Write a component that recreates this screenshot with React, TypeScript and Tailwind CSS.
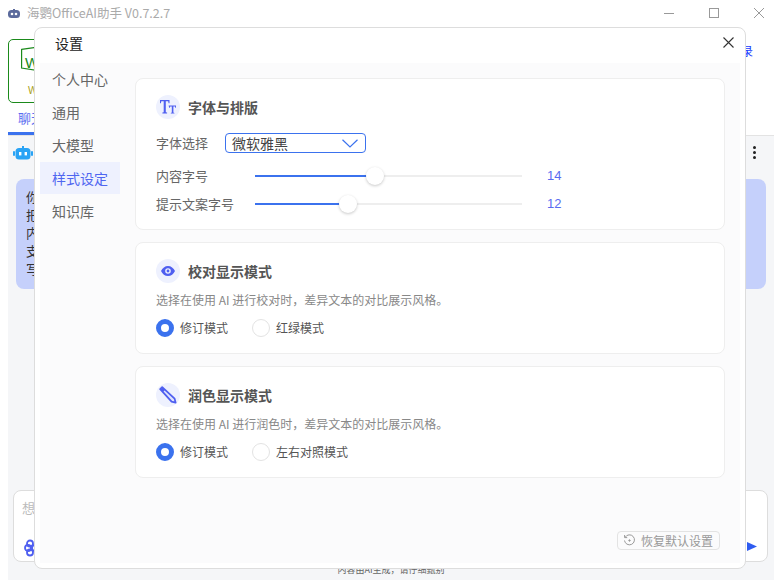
const TtIcon = () => (
  <svg width="16" height="14" viewBox="0 0 16 14" fill="#4f5ff0">
    <path d="M0 0h9.5v3.2H8.6L8.2 1.3H5.8v10.9l1.3.4V13.4H2.4v-.8l1.3-.4V1.3H1.3L.9 3.2H0z" />
    <path d="M8.6 5.4H16v2.4h-.7l-.3-1.3h-1.6v6.1l1 .3v.5H10.8v-.5l1-.3V6.5h-1.6l-.3 1.3h-.7z" />
  </svg>
);

const EyeIcon = () => (
  <svg width="14" height="10" viewBox="0 0 14 10">
    <path
      fill="#4f5ff0"
      fillRule="evenodd"
      d="M7 0c3 0 5.6 2 7 5-1.4 3-4 5-7 5S1.4 8 0 5c1.4-3 4-5 7-5zm0 2.2A2.8 2.8 0 1 0 7 7.8 2.8 2.8 0 0 0 7 2.2zm0 1.4a1.4 1.4 0 1 1 0 2.8 1.4 1.4 0 0 1 0-2.8z"
    />
  </svg>
);

const PencilIcon = () => (
  <svg width="18" height="18" viewBox="0 0 18 18" fill="none">
    <path d="M1.2 3.2 3.2 1.2 15.6 12.6 16.6 16.6 12.6 15.6Z" fill="#dfe3fd" stroke="#4f5ff0" strokeWidth="1.8" strokeLinejoin="round" />
    <path d="M1.5 3.5 3.5 1.5 6 4 4 6Z" fill="#4f5ff0" />
  </svg>
);

function SectionTitle({ icon, title }: { icon: React.ReactNode; title: string }) {
  return (
    <div className="flex items-center h-6">
      <span className="w-6 h-6 rounded-full bg-[#eef1fe] flex items-center justify-center">{icon}</span>
      <span className="ml-2 text-[14px] leading-6 font-bold text-[#555]">{title}</span>
    </div>
  );
}

function SliderRow({ label, value, fill }: { label: string; value: number; fill: string }) {
  return (
    <div className="flex items-center h-5 text-[13px] text-[#666]">
      <span className="w-[99px] leading-5">{label}</span>
      <div className="relative w-[267px] h-[2px] bg-[#eeeeee]">
        <div className={`relative h-[2px] bg-[#3b72ee] ${fill}`}>
          <span className="absolute right-[-9px] top-[-8px] w-[18px] h-[18px] rounded-full bg-white shadow-[0_1px_3px_rgba(0,0,0,0.22)]" />
        </div>
      </div>
      <span className="ml-[25px] text-[13px] text-[#5a6cf0] font-['Liberation_Sans',sans-serif]">{value}</span>
    </div>
  );
}

function Radio({ label, checked }: { label: string; checked?: boolean }) {
  return (
    <div className="flex items-center">
      <span
        className={
          checked
            ? 'w-[18px] h-[18px] rounded-full border-[5px] border-[#3b72ee] bg-white'
            : 'w-[18px] h-[18px] rounded-full border border-[#e3e3e3] bg-white'
        }
      />
      <span className="ml-[6px] text-[12px] leading-[18px] text-[#555]">{label}</span>
    </div>
  );
}

function ModeCard({ icon, title, desc, options }: { icon: React.ReactNode; title: string; desc: string; options: string[] }) {
  return (
    <div className="h-[112px] bg-white border border-[#eeeeee] rounded-lg pl-5 pt-4">
      <SectionTitle icon={icon} title={title} />
      <p className="mt-2 text-[12px] leading-[18px] text-[#888]">{desc}</p>
      <div className="mt-[10px] flex gap-6">
        <Radio label={options[0]} checked />
        <Radio label={options[1]} />
      </div>
    </div>
  );
}

const navItems = ['个人中心', '通用', '大模型', '样式设定', '知识库'];

export default function App() {
  return (
    <div className="relative w-[782px] h-[588px] bg-white overflow-hidden flex flex-col font-['Noto_Sans_CJK_SC','Noto_Sans',sans-serif]">
      {/* title bar */}
      <div className="h-7 shrink-0 flex items-center pl-2 pb-[2px]">
        <svg width="12" height="9" viewBox="0 0 12 9" fill="#5b6a9c">
          <rect x="0" y="1" width="12" height="8" rx="3.5" />
          <rect x="5" y="0" width="2" height="2" />
          <circle cx="4" cy="5" r="1.3" fill="#fff" />
          <circle cx="8" cy="5" r="1.3" fill="#fff" />
        </svg>
        <span className="ml-[7px] text-[12.5px] leading-none text-[#aaaaaa]">海鹦OfficeAI助手 V0.7.2.7</span>
        <div className="ml-auto flex items-center pr-[18px] gap-[35px]">
          <span className="w-[10px] h-px bg-[#999]" />
          <span className="w-[10px] h-[10px] border border-[#999]" />
          <svg width="10" height="10" viewBox="0 0 10 10" stroke="#999" strokeWidth="1">
            <path d="M0 0 10 10M10 0 0 10" />
          </svg>
        </div>
      </div>

      {/* page behind the dialog */}
      <div className="flex-1 mx-2 mb-2 flex flex-col min-h-0">
        <div className="mt-[11px] flex justify-between items-start">
          <div className="w-[64px] h-[64px] border border-[#1b8a1b] rounded-[5px] pl-3 pt-[6px]">
            <div className="relative w-[40px] h-[26px]">
              <svg className="absolute left-0 top-0" width="40" height="26" viewBox="0 0 40 26" fill="none" stroke="#1b8a1b" strokeWidth="1.2">
                <path d="M.6 3.4 20 .6V25L.6 22Z" />
              </svg>
              <span className="absolute left-[4px] top-[9px] text-[15px] leading-4 text-[#1b8a1b] font-['Liberation_Sans',sans-serif]">W</span>
            </div>
            <span className="block mt-[13px] pl-[7px] text-[10px] leading-3 text-[#a8a020] font-['Liberation_Sans',sans-serif]">W</span>
          </div>
          <span className="mt-1 mr-[21px] text-[12px] leading-4 text-[#1a3cff]">登录</span>
        </div>
        <div className="h-[29px] pl-[10px] pt-[8px] text-[13px] leading-[14px] text-[#5a6cf0]">聊天</div>
        <div className="h-[3px] w-[60px] bg-[#3b72ee]" />
        <div className="flex-1 bg-[#f5f6f8] border-t border-[#e3e3e3] relative flex flex-col">
          <div className="flex items-center justify-between h-[33px] mb-[10px] px-[5px]">
            <svg width="20" height="14" viewBox="0 0 20 14" fill="#29a3f5">
              <rect x="0" y="5" width="2" height="5" rx="1" />
              <rect x="18" y="5" width="2" height="5" rx="1" />
              <rect x="2.5" y="2" width="15" height="11.5" rx="3.5" />
              <rect x="9" y="0" width="2" height="2" />
              <rect x="6" y="6" width="2.4" height="3.4" fill="#fff" />
              <rect x="11.6" y="6" width="2.4" height="3.4" fill="#fff" />
            </svg>
            <div className="flex flex-col gap-[2px] mr-[13px]">
              <span className="w-[3px] h-[3px] rounded-full bg-[#222]" />
              <span className="w-[3px] h-[3px] rounded-full bg-[#222]" />
              <span className="w-[3px] h-[3px] rounded-full bg-[#222]" />
            </div>
          </div>
          <div className="ml-2 mr-2 h-[110px] bg-[#c5d0fb] rounded-lg pl-[10px] pt-[9px] text-[13px] leading-[18px] text-[#333]">
            <div>你</div>
            <div>把</div>
            <div>内</div>
            <div>支</div>
            <div>写</div>
          </div>
          <div className="mt-auto mb-[18px] ml-[5px] mr-[6px] h-[72px] bg-white border border-[#dddddd] rounded-lg relative px-[8px] pt-[7px]">
            <span className="block text-[13px] leading-5 text-[#bbb]">想</span>
            <svg className="absolute left-[10px] bottom-[4px]" width="14" height="18" viewBox="0 0 14 18" fill="none" stroke="#4f5ff0" strokeWidth="1.8">
              <circle cx="6" cy="4.5" r="3" />
              <circle cx="4" cy="9" r="3" />
              <circle cx="6" cy="13.5" r="3" />
              <circle cx="11" cy="9" r="3" />
            </svg>
            <svg className="absolute right-[10px] bottom-[10px]" width="10" height="9" viewBox="0 0 10 9" fill="#2f5cf0">
              <path d="M0 0 10 4.5 0 9Z" />
            </svg>
          </div>
          <div className="absolute bottom-[5px] left-0 right-0 text-center text-[9px] leading-[11px] text-[#666]">内容由AI生成，请仔细甄别</div>
        </div>
      </div>

      {/* settings dialog */}
      <div className="absolute left-[34px] top-[27px] w-[712px] h-[542px] bg-white border border-[#dddddd] rounded-lg px-[5px] pb-[5px] flex flex-col">
        <div className="h-[35px] shrink-0 flex items-center justify-between pl-[15px] pr-[6px] pb-[6px]">
          <span className="text-[14px] leading-5 text-[#222]">设置</span>
          <svg width="11" height="11" viewBox="0 0 11 11" stroke="#333" strokeWidth="1.1">
            <path d="M.5.5l10 10M10.5.5l-10 10" />
          </svg>
        </div>
        <div className="flex-1 bg-[#fbfbfc] flex min-h-0">
          <nav className="w-20 shrink-0 flex flex-col gap-px">
            {navItems.map((item) => (
              <div
                key={item}
                className={
                  item === '样式设定'
                    ? 'h-8 pl-3 flex items-center text-[14px] text-[#4f66f0] bg-[#eef1fe]'
                    : 'h-8 pl-3 flex items-center text-[14px] text-[#666]'
                }
              >
                {item}
              </div>
            ))}
          </nav>
          <div className="flex-1 pl-[15px] pr-[15px] pt-[15px] pb-[13px] flex flex-col">
            <div className="h-[152px] bg-white border border-[#eeeeee] rounded-lg pl-5 pt-4">
              <SectionTitle icon={<TtIcon />} title="字体与排版" />
              <div className="mt-[14px] flex items-center h-5">
                <span className="w-[69px] text-[13px] leading-5 text-[#666]">字体选择</span>
                <div className="w-[141px] h-5 border border-[#3b72ee] rounded-[4px] pl-[6px] pr-[7px] flex items-center justify-between">
                  <span className="text-[14px] leading-[18px] text-[#444]">微软雅黑</span>
                  <svg width="16" height="9" viewBox="0 0 16 9" fill="none" stroke="#3b72ee" strokeWidth="1.2">
                    <path d="M.5.8 8 8 15.5.8" />
                  </svg>
                </div>
              </div>
              <div className="mt-[13px] flex flex-col gap-2">
                <SliderRow label="内容字号" value={14} fill="w-[120px]" />
                <SliderRow label="提示文案字号" value={12} fill="w-[93px]" />
              </div>
            </div>
            <div className="mt-3 flex flex-col gap-3">
              <ModeCard
                icon={<EyeIcon />}
                title="校对显示模式"
                desc="选择在使用 AI 进行校对时，差异文本的对比展示风格。"
                options={['修订模式', '红绿模式']}
              />
              <ModeCard
                icon={<PencilIcon />}
                title="润色显示模式"
                desc="选择在使用 AI 进行润色时，差异文本的对比展示风格。"
                options={['修订模式', '左右对照模式']}
              />
            </div>
            <div className="mt-auto self-end mr-[5px] w-[103px] h-[19px] border border-[#e3e3e3] rounded-[4px] flex items-center pl-[5px] gap-[5px]">
              <svg width="13" height="13" viewBox="0 0 13 13" fill="none" stroke="#999" strokeWidth="1">
                <path d="M2.2 3.2A5 5 0 1 1 1.5 6.5" />
                <path d="M1.6 1v2.6h2.6" />
                <circle cx="6.5" cy="6.5" r=".7" fill="#999" />
              </svg>
              <span className="text-[12px] leading-4 text-[#999]">恢复默认设置</span>
            </div>
          </div>
        </div>
      </div>
    </div>
  );
}
